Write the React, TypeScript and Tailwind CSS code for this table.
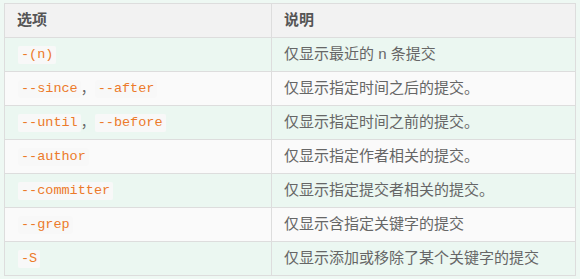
import React from "react";

const rows: { opts: string[]; desc: string }[] = [
  { opts: ["-(n)"], desc: "仅显示最近的 n 条提交" },
  { opts: ["--since", "--after"], desc: "仅显示指定时间之后的提交。" },
  { opts: ["--until", "--before"], desc: "仅显示指定时间之前的提交。" },
  { opts: ["--author"], desc: "仅显示指定作者相关的提交。" },
  { opts: ["--committer"], desc: "仅显示指定提交者相关的提交。" },
  { opts: ["--grep"], desc: "仅显示含指定关键字的提交" },
  { opts: ["-S"], desc: "仅显示添加或移除了某个关键字的提交" },
];

const cjk = "font-['Liberation_Sans','Noto_Sans_CJK_SC',sans-serif]";

function Code({ children }: { children: string }) {
  return (
    <code className="inline-flex h-[18px] items-center rounded-[2px] bg-[#f8f8f8] px-[3px] font-['Liberation_Mono',monospace] text-[13.5px] leading-none text-[#ec7a2a]">
      {children}
    </code>
  );
}

export default function App() {
  return (
    <div className={`min-h-screen bg-[#eef8f3] pl-[4px] pt-[3px] ${cjk}`}>
      <div className="grid w-[572px] grid-cols-[267px_304px] border-l border-t border-[#dddddd] text-[15px]">
        <div className="flex h-[34px] items-center border-b border-r border-[#dddddd] bg-[#f2f2f2] pl-3 font-bold text-[#555555]">
          选项
        </div>
        <div className="flex h-[34px] items-center border-b border-r border-[#dddddd] bg-[#f2f2f2] pl-3 font-bold text-[#555555]">
          说明
        </div>
        {rows.map((r, i) => {
          const bg = i % 2 === 0 ? "bg-[#ebf7f1]" : "bg-[#fafafa]";
          return (
            <React.Fragment key={i}>
              <div className={`flex h-[34px] items-center border-b border-r border-[#dddddd] pl-[13px] text-[#666666] ${bg}`}>
                {r.opts.map((o, j) => (
                  <React.Fragment key={j}>
                    {j > 0 && <span className="text-[14px]">，</span>}
                    <Code>{o}</Code>
                  </React.Fragment>
                ))}
              </div>
              <div className={`flex h-[34px] items-center border-b border-r border-[#dddddd] pl-3 text-[#666666] ${bg}`}>
                {r.desc}
              </div>
            </React.Fragment>
          );
        })}
      </div>
    </div>
  );
}
